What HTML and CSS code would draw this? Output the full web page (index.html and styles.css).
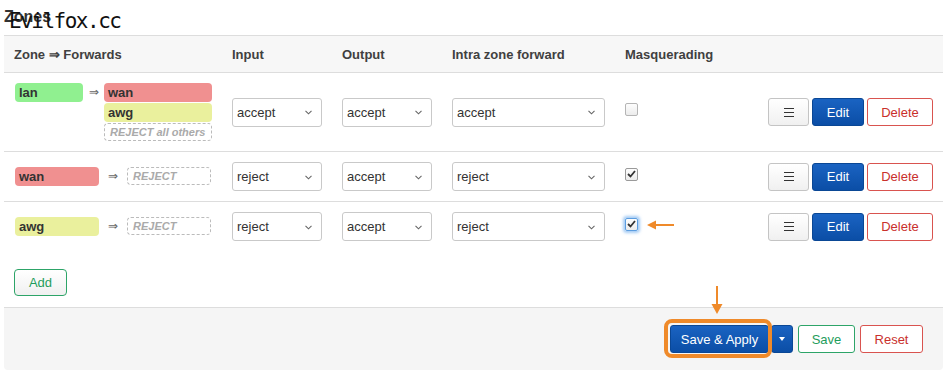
FILE: index.html
```html
<!DOCTYPE html>
<html lang="en">
<head>
<meta charset="UTF-8">
<title>Zones</title>
<link rel="stylesheet" href="styles.css">
</head>
<body>
<div class="page">

  <h2 class="title">Zones</h2>
  <div class="watermark">Evilfox.cc</div>

  <div class="panel">
    <table class="zones">
      <colgroup>
        <col class="c-zone"><col class="c-in"><col class="c-out"><col class="c-intra"><col class="c-masq"><col>
      </colgroup>
      <thead>
        <tr>
          <th>Zone &rArr; Forwards</th><th>Input</th><th>Output</th>
          <th>Intra zone forward</th><th>Masquerading</th><th></th>
        </tr>
      </thead>
      <tbody>
        <!-- lan -->
        <tr>
          <td class="zone-cell">
            <div class="zf zf-multi">
              <span class="zone lan">lan</span>
              <span class="arrow">&rArr;</span>
              <div class="fwd">
                <span class="zone wan">wan</span>
                <span class="zone awg">awg</span>
                <span class="reject">REJECT all others</span>
              </div>
            </div>
          </td>
          <td><div class="select sel-s"><span>accept</span><svg width="7" height="5" viewBox="0 0 7 5"><polyline points="0.5,0.8 3.5,3.8 6.5,0.8" fill="none" stroke="#666" stroke-width="1.1"/></svg></div></td>
          <td><div class="select sel-s"><span>accept</span><svg width="7" height="5" viewBox="0 0 7 5"><polyline points="0.5,0.8 3.5,3.8 6.5,0.8" fill="none" stroke="#666" stroke-width="1.1"/></svg></div></td>
          <td><div class="select sel-l"><span>accept</span><svg width="7" height="5" viewBox="0 0 7 5"><polyline points="0.5,0.8 3.5,3.8 6.5,0.8" fill="none" stroke="#666" stroke-width="1.1"/></svg></div></td>
          <td><span class="cbox"></span></td>
          <td>
            <div class="row-btns">
              <button class="btn btn-menu"><svg width="10" height="9" viewBox="0 0 10 9"><path d="M0 0.5H10M0 4.5H10M0 8.5H10" stroke="#333" stroke-width="1"/></svg></button>
              <button class="btn btn-blue btn-edit">Edit</button>
              <button class="btn btn-red btn-del">Delete</button>
            </div>
          </td>
        </tr>
        <!-- wan -->
        <tr>
          <td class="zone-cell">
            <div class="zf zf-single">
              <span class="zone wan">wan</span>
              <span class="arrow">&rArr;</span>
              <span class="reject">REJECT</span>
            </div>
          </td>
          <td><div class="select sel-s"><span>reject</span><svg width="7" height="5" viewBox="0 0 7 5"><polyline points="0.5,0.8 3.5,3.8 6.5,0.8" fill="none" stroke="#666" stroke-width="1.1"/></svg></div></td>
          <td><div class="select sel-s"><span>accept</span><svg width="7" height="5" viewBox="0 0 7 5"><polyline points="0.5,0.8 3.5,3.8 6.5,0.8" fill="none" stroke="#666" stroke-width="1.1"/></svg></div></td>
          <td><div class="select sel-l"><span>reject</span><svg width="7" height="5" viewBox="0 0 7 5"><polyline points="0.5,0.8 3.5,3.8 6.5,0.8" fill="none" stroke="#666" stroke-width="1.1"/></svg></div></td>
          <td><span class="cbox on"><svg width="9" height="8" viewBox="0 0 9 8"><polyline points="1,4 3.5,6.5 8,1" fill="none" stroke="#333" stroke-width="1.8"/></svg></span></td>
          <td>
            <div class="row-btns">
              <button class="btn btn-menu"><svg width="10" height="9" viewBox="0 0 10 9"><path d="M0 0.5H10M0 4.5H10M0 8.5H10" stroke="#333" stroke-width="1"/></svg></button>
              <button class="btn btn-blue btn-edit">Edit</button>
              <button class="btn btn-red btn-del">Delete</button>
            </div>
          </td>
        </tr>
        <!-- awg -->
        <tr class="last">
          <td class="zone-cell">
            <div class="zf zf-single">
              <span class="zone awg">awg</span>
              <span class="arrow">&rArr;</span>
              <span class="reject">REJECT</span>
            </div>
          </td>
          <td><div class="select sel-s"><span>reject</span><svg width="7" height="5" viewBox="0 0 7 5"><polyline points="0.5,0.8 3.5,3.8 6.5,0.8" fill="none" stroke="#666" stroke-width="1.1"/></svg></div></td>
          <td><div class="select sel-s"><span>accept</span><svg width="7" height="5" viewBox="0 0 7 5"><polyline points="0.5,0.8 3.5,3.8 6.5,0.8" fill="none" stroke="#666" stroke-width="1.1"/></svg></div></td>
          <td><div class="select sel-l"><span>reject</span><svg width="7" height="5" viewBox="0 0 7 5"><polyline points="0.5,0.8 3.5,3.8 6.5,0.8" fill="none" stroke="#666" stroke-width="1.1"/></svg></div></td>
          <td><span class="cbox on focus"><svg width="9" height="8" viewBox="0 0 9 8"><polyline points="1,4 3.5,6.5 8,1" fill="none" stroke="#333" stroke-width="1.8"/></svg></span></td>
          <td>
            <div class="row-btns">
              <button class="btn btn-menu"><svg width="10" height="9" viewBox="0 0 10 9"><path d="M0 0.5H10M0 4.5H10M0 8.5H10" stroke="#333" stroke-width="1"/></svg></button>
              <button class="btn btn-blue btn-edit">Edit</button>
              <button class="btn btn-red btn-del">Delete</button>
            </div>
          </td>
        </tr>
      </tbody>
    </table>

    <div class="add-row">
      <button class="btn btn-green btn-add">Add</button>
    </div>

    <div class="actions">
      <div class="apply-group">
        <button class="btn btn-blue btn-apply">Save &amp; Apply</button>
        <button class="btn btn-blue btn-drop"><svg width="6" height="4" viewBox="0 0 6 4"><polygon points="0,0 6,0 3,4" fill="#fff"/></svg></button>
        <span class="ring"></span>
      </div>
      <button class="btn btn-green btn-save">Save</button>
      <button class="btn btn-red btn-reset">Reset</button>
    </div>
  </div>

  <!-- annotation arrows -->
  <svg class="mark mark-down" width="14" height="28" viewBox="0 0 14 28">
    <line x1="7" y1="0" x2="7" y2="20" stroke="#ef8a2a" stroke-width="2"/>
    <polygon points="1.5,18 12.5,18 7,28" fill="#ef8a2a"/>
  </svg>
  <svg class="mark mark-left" width="28" height="10" viewBox="0 0 28 10">
    <line x1="7" y1="5" x2="27" y2="5" stroke="#ef8a2a" stroke-width="2"/>
    <polygon points="0,5 9,0.5 9,9.5" fill="#ef8a2a"/>
  </svg>

</div>
</body>
</html>
```

FILE: styles.css
```css
:root{
  --border:  #dddddd;
  --head-bg: #f7f7f7;
  --foot-bg: #f5f5f5;
  --text:    #404040;
  --blue:    #0e56b1;
  --green:   #1f9d5c;
  --red:     #c9302c;
  --orange:  #ef8a2a;
}
*{box-sizing:border-box;margin:0;padding:0}
body{
  font-family:"Liberation Sans",Arial,sans-serif;
  font-size:13px;
  color:var(--text);
  background:#fff;
}
.page{
  position:relative;
  padding:0 5px 0 4px;
}

/* ---------- heading + watermark ---------- */
.title{
  font-size:16px;
  line-height:20px;
  font-weight:bold;
  color:#333;
  padding-top:7px;
  margin-bottom:8px;
}
.watermark{
  position:absolute;
  left:9px;top:10px;
  font-family:"DejaVu Sans Mono",monospace;
  font-size:21px;
  line-height:22px;
  letter-spacing:-1.5px;
  color:#111;
}

/* ---------- table ---------- */
.zones{
  width:100%;
  table-layout:fixed;
  border-collapse:collapse;
}
.c-zone{width:218px}
.c-in{width:110px}
.c-out{width:110px}
.c-intra{width:173px}
.c-masq{width:141px}
thead th{
  background:var(--head-bg);
  border-top:1px solid var(--border);
  border-bottom:1px solid var(--border);
  height:37px;
  padding:0 10px;
  text-align:left;
  font-weight:bold;
  color:var(--text);
}
tbody td{
  padding:10px;
  border-bottom:1px solid var(--border);
  vertical-align:middle;
}
tbody tr.last td{border-bottom:none}
td.zone-cell{padding-left:11px}

/* zone => forwards */
.zf{display:grid;align-items:start}
.zf-multi{grid-template-columns:68px 21px 108px}
.zf-single{grid-template-columns:84px 28px 84px}
.fwd{display:flex;flex-direction:column;gap:1px}
.zone{
  display:block;
  height:19px;
  line-height:19px;
  padding-left:4px;
  border-radius:4px;
  font-weight:bold;
  color:#333;
}
.lan{background:#90f090}
.wan{background:#f09090}
.awg{background:#eaf09d}
.arrow{
  text-align:center;
  color:#666;
  font-size:12px;
  line-height:18px;
}
.reject{
  display:block;
  height:18px;
  line-height:16px;
  padding-left:5px;
  border:1px dashed #bbb;
  border-radius:4px;
  font-size:11px;
  font-weight:bold;
  font-style:italic;
  color:#aaa;
  white-space:nowrap;
}

/* fake select */
.select{
  display:flex;
  align-items:center;
  justify-content:space-between;
  height:29px;
  padding:0 9px 0 4px;
  border:1px solid #c9c9c9;
  border-radius:3px;
  background:#fff;
  color:#333;
}
.select svg{margin-top:1px}
.sel-s{width:90px}
.sel-l{width:153px}

/* checkbox */
.cbox{
  display:flex;
  align-items:center;
  justify-content:center;
  width:13px;height:13px;
  margin-bottom:5px;
  border:1px solid #b5b5b5;
  border-radius:2px;
  background:linear-gradient(#fdfdfd,#ececec);
}
.cbox.on{border-color:#9a9a9a}
.cbox.focus{
  border-color:#5b9de0;
  box-shadow:0 0 3px 2px rgba(90,160,235,.55);
}

/* ---------- buttons ---------- */
.btn{
  font-family:inherit;
  font-size:13px;
  height:28px;
  border-radius:3px;
  border:1px solid #c4c4c4;
  background:linear-gradient(#fff,#f0f0f0);
  color:#333;
  cursor:pointer;
  display:flex;
  align-items:center;
  justify-content:center;
}
.btn-blue{
  background:linear-gradient(#1a63c2,#0b4ea6);
  border-color:#0a4795;
  color:#fff;
}
.btn-green{border-color:#2da468;color:var(--green)}
.btn-red{border-color:#d9534f;color:var(--red);background:#fff}
.row-btns{display:flex;justify-content:flex-end;gap:3px}
.btn-menu{width:41px}
.btn-edit{width:52px}
.btn-del{width:66px}

.add-row{padding:18px 10px 11px}
.btn-add{width:53px;height:27px;border-radius:4px}

/* ---------- footer ---------- */
.actions{
  display:flex;
  justify-content:flex-end;
  align-items:center;
  gap:5px;
  padding:17px 20px 17px;
  background:var(--foot-bg);
  border-top:1px solid var(--border);
  border-radius:0 0 4px 4px;
}
.apply-group{position:relative;display:flex;gap:2px}
.btn-apply{width:99px}
.btn-drop{width:22px}
.btn-save{width:57px;background:#fff}
.btn-reset{width:63px}
.ring{
  position:absolute;
  left:-6px;top:-6px;
  width:108px;height:39px;
  border:4px solid var(--orange);
  border-radius:8px;
}

/* annotation arrows */
.mark{position:absolute}
.mark-down{left:710px;top:286px}
.mark-left{left:647px;top:220px}
```
